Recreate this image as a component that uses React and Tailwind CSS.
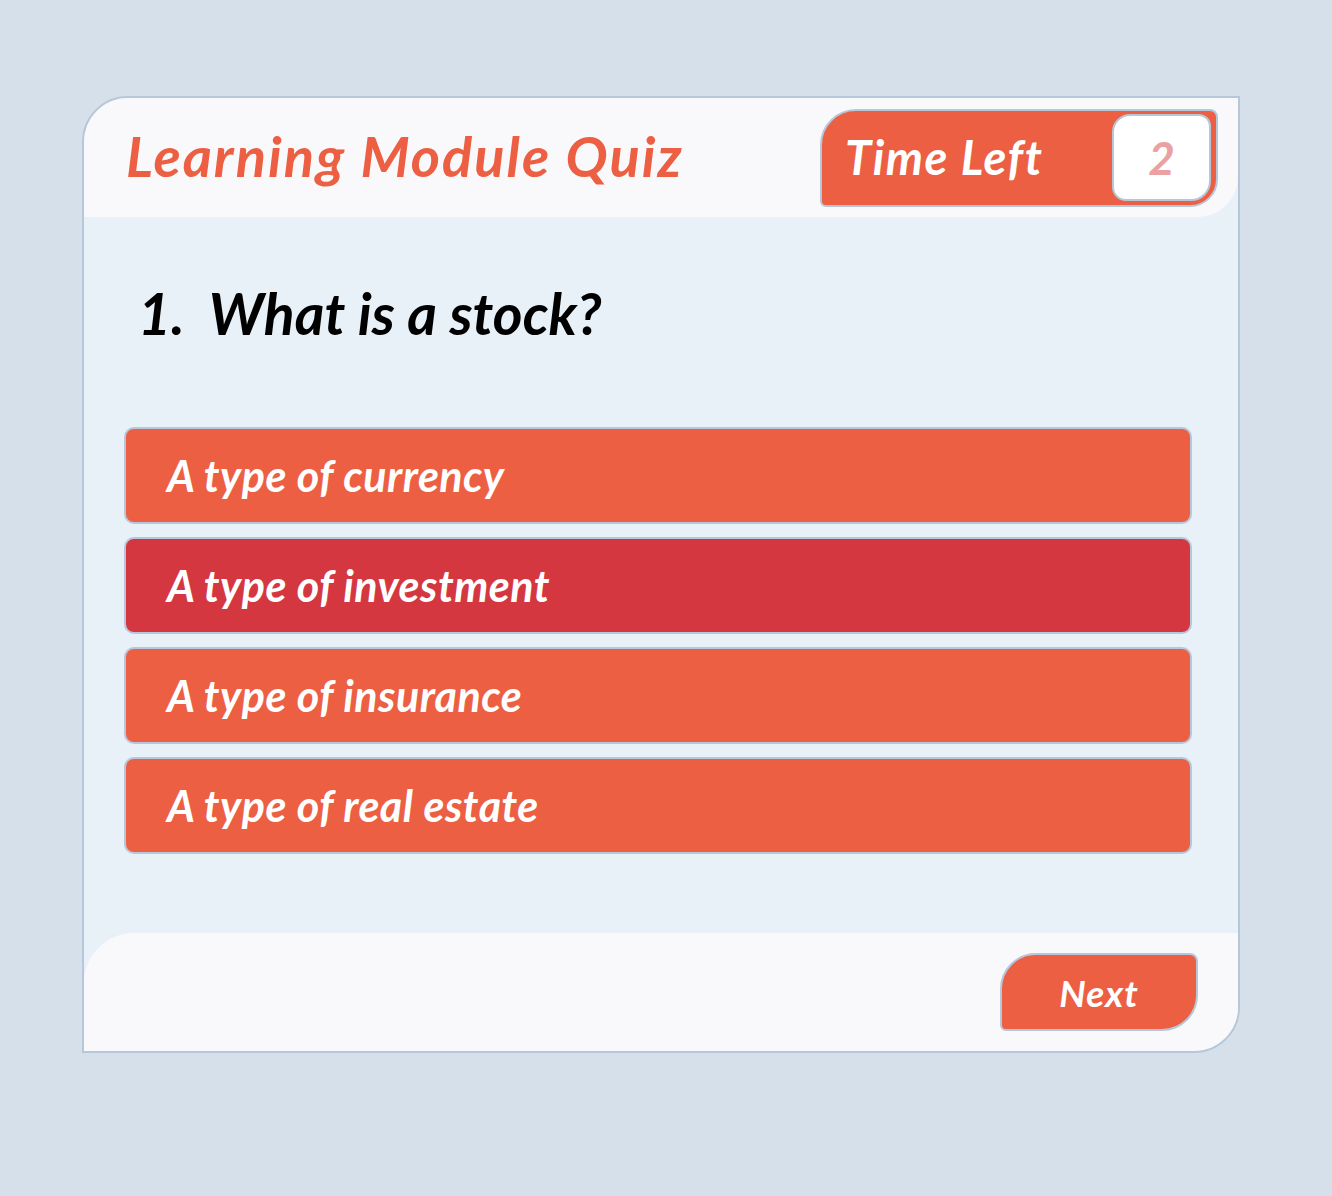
const options = [
  { text: 'A type of currency', selected: false },
  { text: 'A type of investment', selected: true },
  { text: 'A type of insurance', selected: false },
  { text: 'A type of real estate', selected: false },
];

const App = () => {
  return (
    <div
      className="min-h-screen bg-[#d5e0eb] pt-[96px] pl-[82px]"
      style={{ fontFamily: 'Lato, "Open Sans", sans-serif' }}
    >
      <div className="w-[1158px] h-[957px] border-2 border-[#b6c7da] rounded-tl-[46px] rounded-br-[46px] overflow-hidden bg-[#e8f0f8] flex flex-col">
        {/* Header */}
        <div className="h-[119px] shrink-0 bg-[#f9f9fc] rounded-br-[40px] flex items-center justify-between pl-[42px] pr-[20px]">
          <h1 className="text-[56px] font-bold italic text-[#ec5f43] leading-none tracking-[2px] -mt-[4px]">
            Learning Module Quiz
          </h1>
          <div className="w-[398px] h-[98px] border-2 border-[#b6c7da] bg-[#ec5f43] rounded-tl-[36px] rounded-tr-[8px] rounded-bl-[6px] rounded-br-[28px] flex items-center justify-between pl-[23px] pr-[5px]">
            <span className="text-[47px] font-bold italic text-white leading-none tracking-[1.5px]">Time Left</span>
            <div className="w-[99px] h-[87px] bg-white border-2 border-[#b6c7da] rounded-tl-[18px] rounded-tr-[12px] rounded-bl-[14px] rounded-br-[20px] flex items-center justify-center">
              <span className="text-[46px] font-bold italic text-[#eba1a1] leading-none">2</span>
            </div>
          </div>
        </div>

        {/* Question */}
        <div className="pl-[54px] pt-[68px] flex items-center gap-[24px] text-[57px] font-bold italic text-black leading-none">
          <span>1.</span>
          <span>What is a stock?</span>
        </div>

        {/* Options */}
        <div className="mt-[85px] pl-[40px] pr-[46px] flex flex-col gap-[13px]">
          {options.map((option, index) => (
            <div
              key={index}
              className={`h-[97px] border-2 border-[#b6c7da] rounded-[10px] flex items-center pl-[41px] ${
                option.selected ? 'bg-[#d53741]' : 'bg-[#ec5f43]'
              }`}
            >
              <span className="text-[43px] font-bold italic text-white leading-none tracking-[0.5px]">{option.text}</span>
            </div>
          ))}
        </div>

        {/* Footer */}
        <div className="mt-auto h-[118px] shrink-0 bg-[#f9f9fc] rounded-tl-[50px] flex items-center justify-end pr-[40px]">
          <button className="w-[198px] h-[78px] border-2 border-[#b6c7da] bg-[#ec5f43] rounded-tl-[36px] rounded-br-[36px] rounded-tr-[8px] rounded-bl-[6px] flex items-center justify-center">
            <span className="text-[37px] font-bold italic text-white leading-none tracking-[1px]">Next</span>
          </button>
        </div>
      </div>
    </div>
  );
};

export default App;
